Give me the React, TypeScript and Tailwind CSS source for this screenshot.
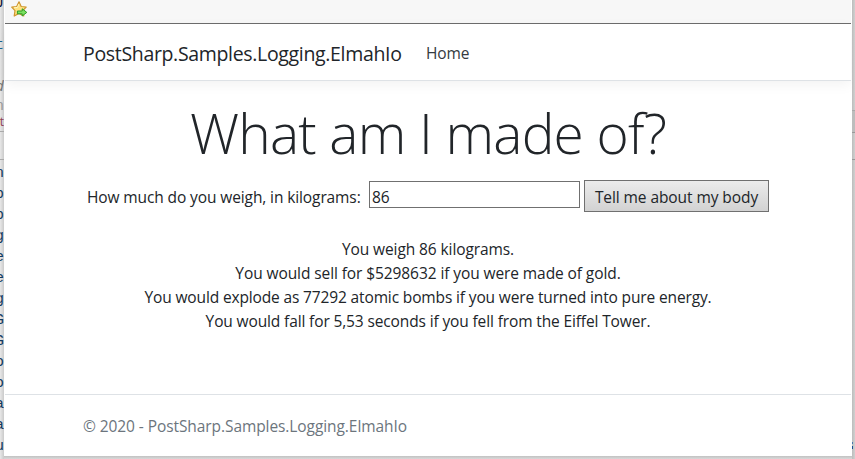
const editorGlyphs = ['n', 'b', 'b', 'g', 'e', 'e', 'g', 'G', 'G', 'o', 'o', 'a', 'a', 'u'];

const results = [
  { text: 'You weigh 86 kilograms.', tracking: 'tracking-[-0.1px]' },
  { text: 'You would sell for $5298632 if you were made of gold.', tracking: 'tracking-[-0.09px]' },
  { text: 'You would explode as 77292 atomic bombs if you were turned into pure energy.', tracking: 'tracking-[-0.14px]' },
  { text: 'You would fall for 5,53 seconds if you fell from the Eiffel Tower.', tracking: 'tracking-[-0.13px]' },
];

function FavoriteIcon() {
  return (
    <svg width="17" height="17" viewBox="0 0 17 17" className="shrink-0">
      <path d="M8 .8 10.2 5.5 15.2 6 11.8 9.6 12.8 15 8 12.4 3.2 15 4 9.7.7 6.1 5.7 5.5Z" fill="#ffe282" stroke="#cf962f" strokeWidth="1.2" strokeLinejoin="round" />
      <path d="M8 2.7 6.5 6.4 3 6.8" fill="none" stroke="#fff7bd" />
      <path d="M6.4 10h4.8V7.8l4.6 3.6-4.6 3.6v-2.2H6.4Z" fill="#7be05f" stroke="#2b9d28" strokeLinejoin="round" />
    </svg>
  );
}

function EditorEdge() {
  return (
    <div className="flex h-[459px] w-1 shrink-0 flex-col overflow-hidden bg-gradient-to-r from-[#e8e8e8] to-[#cacaca] font-['Liberation_Mono',monospace] text-[15px]">
      <div className="flex h-[35px] items-start justify-end leading-[7px] text-[#101840]">J</div>
      <div className="flex h-[42px] items-start justify-end leading-[22px] text-[#17648f]">t</div>
      <div className="flex h-[20px] items-start justify-end leading-[22px] italic text-[#777]">d</div>
      <div className="flex h-[15px] items-start justify-end leading-[20px] text-[#999]">n</div>
      <div className="flex h-[20px] shrink-0 items-start justify-end border-b border-[#aaa] font-['Open_Sans',sans-serif] text-[12px] leading-[20px] text-[#8f4052]">t</div>
      <div className="h-[28px] shrink-0 border-b border-[#aaa]" />
      {editorGlyphs.map((glyph, i) => (
        <div key={i} className="flex h-[21px] shrink-0 justify-end leading-[27px] text-[#123a60]">{glyph}</div>
      ))}
    </div>
  );
}

export default function App() {
  return (
    <div className="flex h-[459px] w-[855px] overflow-hidden bg-[#d0d0d0] font-['Open_Sans',sans-serif] text-[15.5px] text-[#212529]">
      <EditorEdge />
      <div className="flex w-[848px] shrink-0 flex-col">
        <main className="flex h-[456px] shrink-0 flex-col bg-white px-px">
          <div className="flex h-6 shrink-0 items-start border-b border-[#6d6d6d] bg-[#f7f7f7] pl-[6px] pt-px">
            <FavoriteIcon />
          </div>
          <header className="flex h-[57px] shrink-0 items-center border-b border-[#dee2e6] pl-[78px] pt-[3px] shadow-[0_4px_12px_rgba(0,0,0,0.05)]">
            <span className="w-[343px] whitespace-nowrap text-[19.5px] tracking-[-0.33px]">PostSharp.Samples.Logging.ElmahIo</span>
            <span className="pt-px tracking-[-0.15px] text-[#343a40]">Home</span>
          </header>
          <section className="flex h-[313px] shrink-0 flex-col items-center pt-[14px]">
            <h1 className="h-[77px] whitespace-nowrap text-[55px] font-light leading-[75px] tracking-[-0.8px]">What am I made of?</h1>
            <div className="flex h-[48px] w-full pl-[82px] pt-[8px]">
              <label className="w-[282px] whitespace-nowrap leading-[34px] tracking-[-0.11px]">How much do you weigh, in kilograms:</label>
              <input className="mt-px h-[27px] w-[211px] border border-[#707070] bg-white px-[2px] pt-[5px] leading-[20px] tracking-[-0.1px]" defaultValue="86" />
              <button className="ml-1 h-8 w-[185px] whitespace-nowrap border border-[#707070] bg-gradient-to-b from-[#ececec] to-[#d2d2d2] pt-[2px] leading-[28px] tracking-[-0.08px]">Tell me about my body</button>
            </div>
            <div className="mt-[17px] text-center leading-6">
              {results.map((r) => (
                <p key={r.text} className={'whitespace-nowrap ' + r.tracking}>{r.text}</p>
              ))}
            </div>
          </section>
          <footer className="flex h-[62px] items-center border-t border-[#dee2e6] pl-[78px] pt-[2px] text-[#6c757d]">
            <span className="whitespace-nowrap tracking-[-0.08px]">© 2020 - PostSharp.Samples.Logging.ElmahIo</span>
          </footer>
        </main>
        <div className="h-[3px] bg-gradient-to-b from-[#c2c2c2] to-[#d8d8d8]" />
      </div>
      <div className="flex h-[459px] w-[3px] shrink-0 flex-col bg-gradient-to-r from-[#bcbcbc] to-[#d0d0d0]">
        <div className="h-[111px] border-b border-[#aaa]" />
        <div className="h-[22px] border-b border-[#999] bg-[#bdbdbd]" />
        <div className="h-[27px] border-b border-[#999]" />
        <div className="mt-[282px] h-[2px] w-px bg-[#4779ae]" />
        <div className="mt-[2px] h-[3px] w-px bg-[#174f91]" />
      </div>
    </div>
  );
}
